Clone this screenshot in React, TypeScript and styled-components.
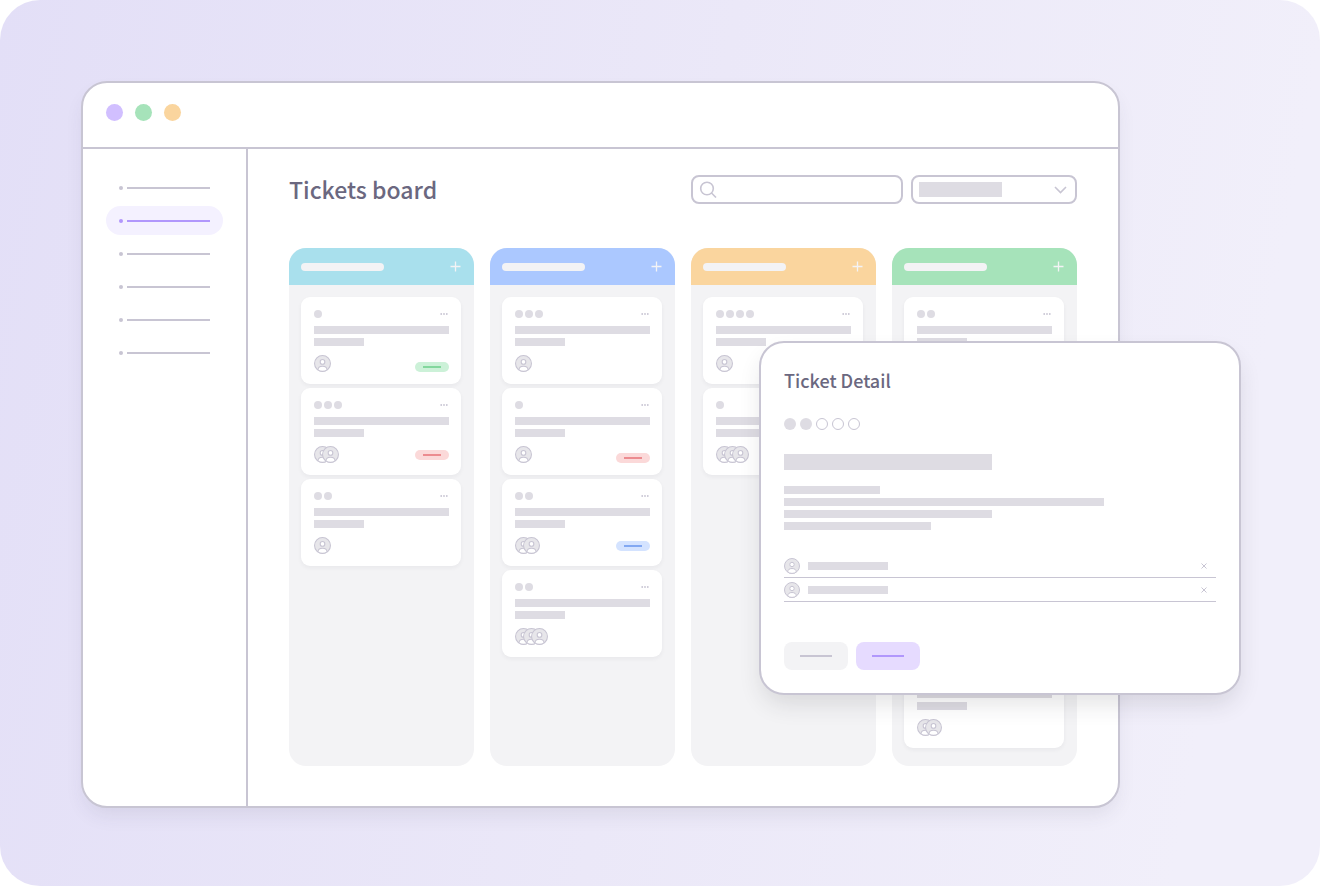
import React from "react";
import styled, { createGlobalStyle } from "styled-components";

const color = {
  line: "#c8c5d3",
  bar: "#dedce3",
  surface: "#f3f3f5",
  text: "#6b6880",
  accent: "#b197fc",
};

const GlobalStyle = createGlobalStyle`
  * { box-sizing: border-box; }
  body { margin: 0; background: #fff; font-family: "Noto Sans CJK JP", "Noto Sans", sans-serif; }
  button, input, select { font: inherit; margin: 0; }
  button { border: 0; padding: 0; background: none; color: inherit; cursor: pointer; display: flex; align-items: center; justify-content: center; }
  ul { list-style: none; margin: 0; padding: 0; }
  svg { display: block; }
`;

const Scene = styled.div`
  position: relative;
  min-height: 100vh;
  padding: 81px 200px 78px 81px;
  border-radius: 40px;
  background: linear-gradient(100deg, #e3dff7 0%, #ebe8f8 50%, #f1effa 90%);
`;

const Window = styled.div`
  border: 2px solid ${color.line};
  border-radius: 26px;
  background: #fff;
  overflow: hidden;
  box-shadow: 0 10px 20px -4px rgba(60, 55, 80, 0.1);
`;

const TitleBar = styled.header`
  display: flex;
  gap: 12px;
  height: 66px;
  padding: 21px 23px;
  border-bottom: 2px solid ${color.line};
`;

const WindowDot = styled.span<{ $fill: string }>`
  width: 17px;
  height: 17px;
  border-radius: 50%;
  background: ${(p) => p.$fill};
`;

const Body = styled.div`
  display: flex;
`;

const Sidebar = styled.nav`
  flex: none;
  width: 165px;
  padding: 24px 23px;
  border-right: 2px solid ${color.line};
`;

const NavList = styled.ul`
  display: grid;
  gap: 4px;
`;

const NavLink = styled.a<{ $active?: boolean }>`
  display: flex;
  align-items: center;
  gap: 4px;
  height: 29px;
  padding: 0 12px 0 13px;
  border-radius: 15px;
  color: ${(p) => (p.$active ? color.accent : color.line)};
  background: ${(p) => (p.$active ? "#f4f1ff" : "transparent")};
`;

const NavBullet = styled.span`
  width: 4px;
  height: 4px;
  border-radius: 50%;
  background: currentColor;
`;

const NavLine = styled.span`
  width: 83px;
  height: 2px;
  background: currentColor;
`;

const Main = styled.main`
  flex: 1;
  min-width: 0;
  padding: 26px 41px 40px;
`;

const BoardHeader = styled.div`
  display: flex;
  align-items: center;
  gap: 8px;
  height: 29px;
  margin-bottom: 44px;
`;

const BoardTitle = styled.h1`
  flex: 1;
  margin: 0;
  color: ${color.text};
  font-size: 23px;
  font-weight: 500;
  line-height: 29px;
`;

const Field = styled.label<{ $width: number }>`
  display: flex;
  align-items: center;
  justify-content: space-between;
  gap: 8px;
  width: ${(p) => p.$width}px;
  height: 29px;
  padding: 0 8px 0 6px;
  position: relative;
  border: 2px solid ${color.line};
  border-radius: 8px;
  color: ${color.line};
`;

const SearchInput = styled.input`
  flex: 1;
  min-width: 0;
  border: 0;
  outline: 0;
  background: none;
  font-size: 14px;
  color: ${color.text};
`;

const FilterSelect = styled.select`
  position: absolute;
  inset: 0;
  width: 100%;
  height: 100%;
  border: 0;
  opacity: 0;
`;

const Columns = styled.div`
  display: grid;
  grid-template-columns: repeat(4, 1fr);
  gap: 16px;
`;

const ColumnBox = styled.section`
  border-radius: 17px;
  overflow: hidden;
  background: ${color.surface};
`;

const ColumnHeader = styled.header<{ $fill: string }>`
  display: flex;
  align-items: center;
  justify-content: space-between;
  height: 37px;
  padding: 0 13px 0 12px;
  background: ${(p) => p.$fill};
  color: ${color.surface};
`;

const CardList = styled.ul`
  display: grid;
  align-content: start;
  gap: 4px;
  padding: 12px 13px 18px 12px;
`;

const CardBox = styled.li`
  padding: 13px 12px 12px 13px;
  border-radius: 9px;
  background: #fff;
  box-shadow: 0 2px 4px rgba(40, 40, 60, 0.05);
`;

const Bar = styled.div<{ $w?: number; $h?: number; $fill?: string; $round?: boolean }>`
  width: ${(p) => (p.$w ? `${p.$w}px` : "100%")};
  height: ${(p) => p.$h ?? 8}px;
  border-radius: ${(p) => (p.$round ? 4 : 0)}px;
  background: ${(p) => p.$fill ?? color.bar};
`;

const CardTop = styled.div`
  display: flex;
  justify-content: space-between;
  align-items: center;
  height: 8px;
  margin-bottom: 8px;
`;

const DotRow = styled.div<{ $gap: number }>`
  display: flex;
  gap: ${(p) => p.$gap}px;
`;

const Dot = styled.span<{ $size: number; $hollow?: boolean }>`
  width: ${(p) => p.$size}px;
  height: ${(p) => p.$size}px;
  border-radius: 50%;
  background: ${(p) => (p.$hollow ? "#fff" : color.bar)};
  border: ${(p) => (p.$hollow ? `1px solid ${color.line}` : "0")};
`;

const Lines = styled.div`
  display: grid;
  gap: 4px;
`;

const CardFooter = styled.div<{ $low?: boolean }>`
  display: flex;
  justify-content: space-between;
  align-items: ${(p) => (p.$low ? "flex-end" : "center")};
  margin-top: 9px;
`;

const AvatarStack = styled.div`
  display: flex;
  svg + svg { margin-left: -9px; }
`;

const Badge = styled.span<{ $fill: string; $ink: string }>`
  display: flex;
  align-items: center;
  width: 34px;
  height: 10px;
  padding: 0 8px;
  border-radius: 5px;
  background: ${(p) => p.$fill};
  &::before {
    content: "";
    flex: 1;
    height: 2px;
    background: ${(p) => p.$ink};
  }
`;

const Detail = styled.div`
  position: absolute;
  top: 341px;
  right: 79px;
  width: 482px;
  padding: 23px;
  border: 2px solid ${color.line};
  border-radius: 25px;
  background: #fff;
  box-shadow: 0 12px 24px -4px rgba(40, 40, 50, 0.14);
`;

const DetailTitle = styled.h2`
  margin: 0 0 24px;
  color: ${color.text};
  font-size: 18px;
  font-weight: 500;
  line-height: 28px;
`;

const Summary = styled.div`
  display: grid;
  gap: 16px;
  margin: 24px 0;
`;

const PersonRow = styled.li`
  display: flex;
  align-items: center;
  gap: 8px;
  height: 24px;
  padding: 4px 8px 3px 0;
  border-bottom: 1px solid ${color.line};
`;

const RemoveButton = styled.button`
  width: 8px;
  height: 8px;
  margin-left: auto;
  color: ${color.line};
`;

const Actions = styled.div`
  display: flex;
  gap: 8px;
  margin-top: 40px;
`;

const ActionButton = styled.button<{ $primary?: boolean }>`
  width: 64px;
  height: 28px;
  border-radius: 8px;
  background: ${(p) => (p.$primary ? "#e6dbff" : color.surface)};
`;

const Avatar = ({ size = 17 }: { size?: number }) => (
  <svg width={size} height={size} viewBox="0 0 16 16" fill="none" stroke={color.line}>
    <circle cx="8" cy="8" r="7.5" fill="#e7e6ea" />
    <path d="M3.7 14c.1-2.300 1.700-3.500 4.300-3.500s4.200 1.200 4.300 3.500c-1.200.9-2.600 1.400-4.300 1.400S4.900 14.900 3.700 14Z" fill="#fff" />
    <circle cx="8" cy="6.500" r="2.200" fill="#fff" />
  </svg>
);

const PlusIcon = () => (
  <svg width="11" height="11" viewBox="0 0 11 11" stroke="currentColor" strokeWidth="1.300">
    <path d="M5.500 .5v10M.5 5.500h10" />
  </svg>
);

const MoreIcon = () => (
  <svg width="9" height="2" viewBox="0 0 9 2" fill={color.line}>
    <circle cx="1.200" cy="1" r=".9" />
    <circle cx="4" cy="1" r=".9" />
    <circle cx="6.800" cy="1" r=".9" />
  </svg>
);

const SearchIcon = () => (
  <svg width="18" height="17" viewBox="0 0 18 17" fill="none" stroke="currentColor" strokeWidth="1.600">
    <circle cx="8" cy="7.500" r="6.300" />
    <path d="m12.500 12 4.500 4.500" />
  </svg>
);

const ChevronIcon = () => (
  <svg width="13" height="8" viewBox="0 0 13 8" fill="none" stroke="currentColor" strokeWidth="1.600">
    <path d="m1 1 5.500 5.500L12 1" />
  </svg>
);

const CloseIcon = () => (
  <svg width="8" height="8" viewBox="0 0 8 8" stroke="currentColor">
    <path d="m1.500 1.500 5 5m0-5-5 5" />
  </svg>
);

const badges = {
  green: { fill: "#ccf1d8", ink: "#83d79d" },
  red: { fill: "#fbd9d9", ink: "#ec8b8f" },
  blue: { fill: "#d4e3ff", ink: "#82a8f2" },
};

type Ticket = { dots: number; people: number; badge?: keyof typeof badges; low?: boolean };

const columns: { fill: string; tickets: Ticket[] }[] = [
  {
    fill: "#a9e0ed",
    tickets: [
      { dots: 1, people: 1, badge: "green", low: true },
      { dots: 3, people: 2, badge: "red" },
      { dots: 2, people: 1 },
    ],
  },
  {
    fill: "#abc8ff",
    tickets: [
      { dots: 3, people: 1 },
      { dots: 1, people: 1, badge: "red", low: true },
      { dots: 2, people: 2, badge: "blue" },
      { dots: 2, people: 3 },
    ],
  },
  {
    fill: "#fad59e",
    tickets: [
      { dots: 4, people: 1 },
      { dots: 1, people: 3 },
    ],
  },
  {
    fill: "#a6e3ba",
    tickets: [
      { dots: 2, people: 1 },
      { dots: 1, people: 1 },
      { dots: 2, people: 1 },
      { dots: 3, people: 2 },
      { dots: 2, people: 2 },
    ],
  },
];

const times = (n: number) => Array.from({ length: n }, (_, i) => i);

const Card = ({ dots, people, badge, low }: Ticket) => (
  <CardBox>
    <CardTop>
      <DotRow $gap={2}>{times(dots).map((i) => <Dot key={i} $size={8} />)}</DotRow>
      <button aria-label="Ticket options"><MoreIcon /></button>
    </CardTop>
    <Lines>
      <Bar />
      <Bar $w={50} />
    </Lines>
    <CardFooter $low={low}>
      <AvatarStack>{times(people).map((i) => <Avatar key={i} />)}</AvatarStack>
      {badge && <Badge $fill={badges[badge].fill} $ink={badges[badge].ink} />}
    </CardFooter>
  </CardBox>
);

export default function App() {
  return (
    <Scene>
      <GlobalStyle />
      <Window>
        <TitleBar>
          <WindowDot $fill="#d1bfff" />
          <WindowDot $fill="#a6e3ba" />
          <WindowDot $fill="#fad59e" />
        </TitleBar>
        <Body>
          <Sidebar aria-label="Main">
            <NavList>
              {times(6).map((i) => (
                <li key={i}>
                  <NavLink href={`#section-${i + 1}`} aria-label={`Section ${i + 1}`} $active={i === 1}>
                    <NavBullet />
                    <NavLine />
                  </NavLink>
                </li>
              ))}
            </NavList>
          </Sidebar>
          <Main>
            <BoardHeader>
              <BoardTitle>Tickets board</BoardTitle>
              <Field $width={212}>
                <SearchIcon />
                <SearchInput type="search" aria-label="Search tickets" />
              </Field>
              <Field $width={166}>
                <Bar $w={83} $h={15} />
                <ChevronIcon />
                <FilterSelect aria-label="Filter tickets" />
              </Field>
            </BoardHeader>
            <Columns>
              {columns.map((column, i) => (
                <ColumnBox key={i}>
                  <ColumnHeader $fill={column.fill}>
                    <Bar $w={83} $fill={color.surface} $round />
                    <button aria-label="Add ticket"><PlusIcon /></button>
                  </ColumnHeader>
                  <CardList>
                    {column.tickets.map((ticket, j) => <Card key={j} {...ticket} />)}
                  </CardList>
                </ColumnBox>
              ))}
            </Columns>
          </Main>
        </Body>
      </Window>
      <Detail role="dialog" aria-labelledby="detail-title">
        <DetailTitle id="detail-title">Ticket Detail</DetailTitle>
        <DotRow $gap={4}>{times(5).map((i) => <Dot key={i} $size={12} $hollow={i > 1} />)}</DotRow>
        <Summary>
          <Bar $w={208} $h={16} />
          <Lines>
            <Bar $w={96} />
            <Bar $w={320} />
            <Bar $w={208} />
            <Bar $w={147} />
          </Lines>
        </Summary>
        <ul>
          {times(2).map((i) => (
            <PersonRow key={i}>
              <Avatar size={16} />
              <Bar $w={80} />
              <RemoveButton aria-label="Remove person"><CloseIcon /></RemoveButton>
            </PersonRow>
          ))}
        </ul>
        <Actions>
          <ActionButton aria-label="Cancel"><Bar $w={32} $h={2} $fill={color.line} /></ActionButton>
          <ActionButton aria-label="Save" $primary><Bar $w={32} $h={2} $fill={color.accent} /></ActionButton>
        </Actions>
      </Detail>
    </Scene>
  );
}
